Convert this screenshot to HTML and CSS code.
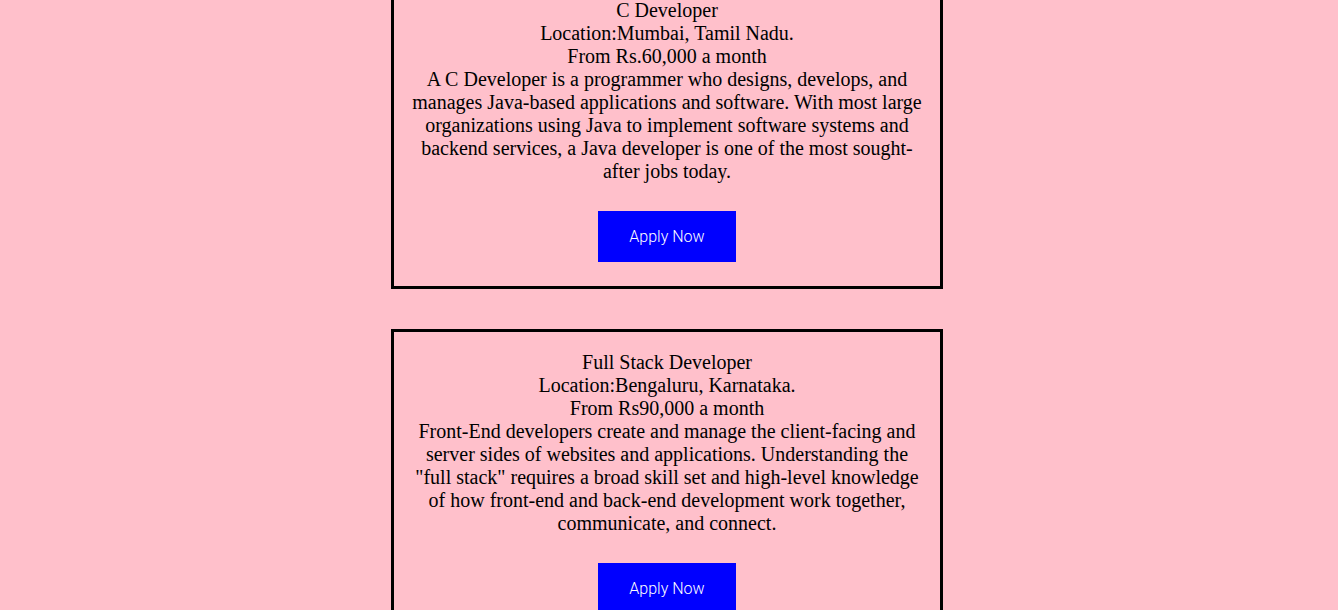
FILE: index.html
```html
<!DOCTYPE html>
<html>
<head>
<meta charset="utf-8">
<link rel="stylesheet" href="styles.css">
</head>
<body>
<div class="jobs">
  <div class="card first">
    <div class="info">
      <div>C Developer</div>
      <div>Location:Mumbai, Tamil Nadu.</div>
      <div>From Rs.60,000 a month</div>
      <div>A C Developer is a programmer who designs, develops, and manages Java-based applications and software. With most large organizations using Java to implement software systems and backend services, a Java developer is one of the most sought-after jobs today.</div>
    </div>
    <button class="apply">Apply Now</button>
  </div>
  <div class="card">
    <div class="info">
      <div>Full Stack Developer</div>
      <div>Location:Bengaluru, Karnataka.</div>
      <div>From Rs90,000 a month</div>
      <div>Front-End developers create and manage the client-facing and server sides of websites and applications. Understanding the "full stack" requires a broad skill set and high-level knowledge of how front-end and back-end development work together, communicate, and connect.</div>
    </div>
    <button class="apply">Apply Now</button>
  </div>
</div>
</body>
</html>
```
FILE: styles.css
```css
html, body {
  margin: 0;
  padding: 0;
  background: #ffc0cb;
}
body {
  font-family: "Liberation Serif", "Times New Roman", serif;
  font-size: 20px;
  line-height: 23px;
  color: #000;
}
.jobs {
  display: flex;
  flex-direction: column;
  align-items: center;
  gap: 40px;
  padding: 0 4px 40px 0;
}
.card {
  box-sizing: border-box;
  width: 552px;
  border: 3px solid #000;
  padding: 19px 17px 24px;
  display: flex;
  flex-direction: column;
  align-items: center;
  text-align: center;
}
.card.first {
  margin-top: -23px;
}
.info {
  width: 100%;
}
.apply {
  margin-top: 28px;
  width: 138px;
  height: 51px;
  border: none;
  background: #0000ff;
  color: #fff;
  font-family: Roboto, "Liberation Sans", sans-serif;
  font-weight: 300;
  font-size: 16px;
  padding: 0;
}
```
